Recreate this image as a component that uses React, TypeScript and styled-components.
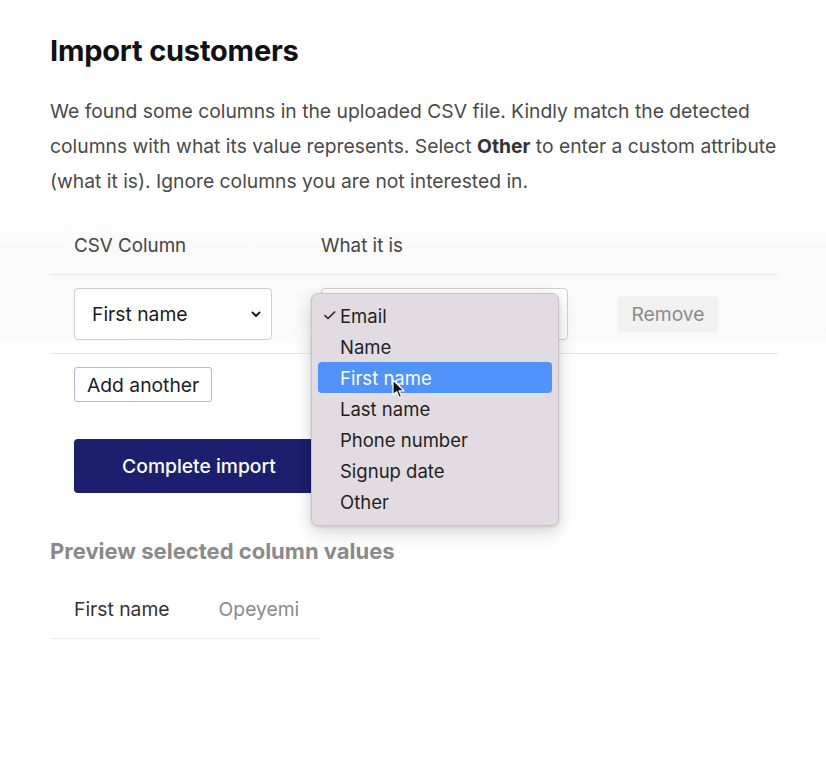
import React from "react";
import styled, { createGlobalStyle } from "styled-components";

const Global = createGlobalStyle`
  html, body { margin: 0; padding: 0; background: #ffffff; }
  body { font-family: Inter, "Noto Sans", Arial, sans-serif; color: #222; }
  * { box-sizing: border-box; }
`;

const Page = styled.div`
  width: 826px;
  min-height: 762px;
  padding-top: 33px;
  background: #fff;
`;

const Inner = styled.div`
  padding: 0 48px 0 50px;
`;

const Title = styled.h1`
  margin: 0;
  font-size: 29px;
  line-height: 36px;
  font-weight: 700;
  color: #111;
  letter-spacing: -0.2px;
`;

const Lead = styled.p`
  margin: 25px 0 0;
  font-size: 19.3px;
  line-height: 35px;
  color: #4a4a4a;
  strong { font-weight: 700; color: #333; }
`;

const Band = styled.div`
  margin-top: 16px;
  padding: 0 48px 0 50px;
  background: linear-gradient(#fefefe, #fafafa 25%, #fafafa 80%, #fefefe);
`;

const Table = styled.div`
  display: flex;
  flex-direction: column;
`;

const HeadRow = styled.div`
  display: grid;
  grid-template-columns: 198px 247px 150px;
  column-gap: 49px;
  padding: 18px 24px 0;
  height: 60px;
  border-bottom: 1px solid #e6e6e6;
`;

const HeadCell = styled.div`
  font-size: 18.8px;
  line-height: 26px;
  color: #444;
`;

const BodyRow = styled.div`
  display: grid;
  grid-template-columns: 198px 247px auto;
  column-gap: 49px;
  align-items: center;
  padding: 13px 24px;
  border-bottom: 1px solid #e6e6e6;
`;

const SelectWrap = styled.div`
  position: relative;
  height: 52px;
`;

const SelectBox = styled.div`
  height: 52px;
  display: flex;
  align-items: center;
  justify-content: space-between;
  padding: 0 9px 0 17px;
  background: #fff;
  border: 1px solid #cfcfcf;
  border-radius: 4px;
  font-size: 19.3px;
  color: #1a1a1a;
`;

const Chevron = styled.svg`
  width: 12px;
  height: 12px;
  margin-left: auto;
`;

const RemoveButton = styled.button`
  justify-self: start;
  margin-left: 1px;
  width: 100px;
  height: 36px;
  padding: 0;
  border: none;
  border-radius: 3px;
  background: #f1f1f1;
  font-family: inherit;
  font-size: 19.3px;
  color: #8b8b8b;
`;

const Menu = styled.ul`
  position: absolute;
  left: -10px;
  top: 5px;
  width: 248px;
  margin: 0;
  padding: 6px 6px 8px;
  list-style: none;
  background: #e2dbe2;
  border: 1px solid #c9c3c9;
  border-radius: 7px;
  box-shadow: 0 6px 18px rgba(0, 0, 0, 0.18), 0 1px 3px rgba(0, 0, 0, 0.12);
  z-index: 5;
`;

const MenuItem = styled.li<{ $active?: boolean }>`
  position: relative;
  height: 31px;
  display: flex;
  align-items: center;
  padding-left: 22px;
  border-radius: 4px;
  font-size: 18.5px;
  color: ${(p) => (p.$active ? "#ffffff" : "#1f1f1f")};
  background: ${(p) => (p.$active ? "#4f93fb" : "transparent")};
`;

const Check = styled.span`
  position: absolute;
  left: 4px;
  top: 5px;
  font-size: 17px;
  color: #222;
`;

const Cursor = styled.svg`
  position: absolute;
  left: 74px;
  top: 17px;
  width: 14px;
  height: 20px;
`;

const Actions = styled.div`
  padding: 13px 0 0 24px;
  display: flex;
  flex-direction: column;
  align-items: flex-start;
  gap: 37px;
`;

const AddButton = styled.button`
  height: 35px;
  padding: 0 12px;
  background: #fff;
  border: 1px solid #b5b5da;
  border-radius: 3px;
  font-family: inherit;
  font-size: 19.3px;
  color: #1c1c2c;
`;

const PrimaryButton = styled.button`
  width: 250px;
  height: 54px;
  border: none;
  border-radius: 4px;
  background: #1b1f6e;
  color: #fff;
  font-family: inherit;
  font-size: 19.3px;
  font-weight: 500;
`;

const PreviewTitle = styled.h2`
  margin: 44px 0 0;
  font-size: 22px;
  line-height: 28px;
  font-weight: 700;
  color: #8a8a8a;
`;

const PreviewRow = styled.div`
  width: 270px;
  margin-top: 30px;
  display: flex;
  gap: 49px;
  padding: 0 24px 15px;
  border-bottom: 1px solid #ececec;
  font-size: 19.3px;
  line-height: 28px;
  white-space: nowrap;
`;

const PreviewKey = styled.span`
  color: #333;
`;

const PreviewValue = styled.span`
  color: #8a8a8a;
`;

const options = ["Email", "Name", "First name", "Last name", "Phone number", "Signup date", "Other"];

const ChevronIcon = () => (
  <Chevron viewBox="0 0 12 12">
    <path d="M2.5 4.5 L6 8 L9.5 4.5" fill="none" stroke="#222" strokeWidth="2" strokeLinecap="round" strokeLinejoin="round" />
  </Chevron>
);

export default function App() {
  return (
    <Page>
      <Global />
      <Inner>
        <Title>Import customers</Title>
        <Lead>
          We found some columns in the uploaded CSV file. Kindly match the detected columns with what its value
          represents. Select <strong>Other</strong> to enter a custom attribute (what it is). Ignore columns you are
          not interested in.
        </Lead>
      </Inner>
      <Band>
        <Table>
          <HeadRow>
            <HeadCell>CSV Column</HeadCell>
            <HeadCell>What it is</HeadCell>
          </HeadRow>
          <BodyRow>
            <SelectBox>
              <span>First name</span>
              <ChevronIcon />
            </SelectBox>
            <SelectWrap>
              <SelectBox>
                <ChevronIcon />
              </SelectBox>
              <Menu>
                {options.map((o, i) => (
                  <MenuItem key={o} $active={i === 2}>
                    {i === 0 && <Check>✓</Check>}
                    {o}
                    {i === 2 && (
                      <Cursor viewBox="0 0 14 20">
                        <path
                          d="M1 1 L1 16 L4.6 12.6 L7.2 18.6 L9.6 17.6 L7 11.8 L12 11.8 Z"
                          fill="#111"
                          stroke="#fff"
                          strokeWidth="1.2"
                          strokeLinejoin="round"
                        />
                      </Cursor>
                    )}
                  </MenuItem>
                ))}
              </Menu>
            </SelectWrap>
            <RemoveButton>Remove</RemoveButton>
          </BodyRow>
        </Table>
      </Band>
      <Inner>
        <Actions>
          <AddButton>Add another</AddButton>
          <PrimaryButton>Complete import</PrimaryButton>
        </Actions>
        <PreviewTitle>Preview selected column values</PreviewTitle>
        <PreviewRow>
          <PreviewKey>First name</PreviewKey>
          <PreviewValue>Opeyemi</PreviewValue>
        </PreviewRow>
      </Inner>
    </Page>
  );
}
